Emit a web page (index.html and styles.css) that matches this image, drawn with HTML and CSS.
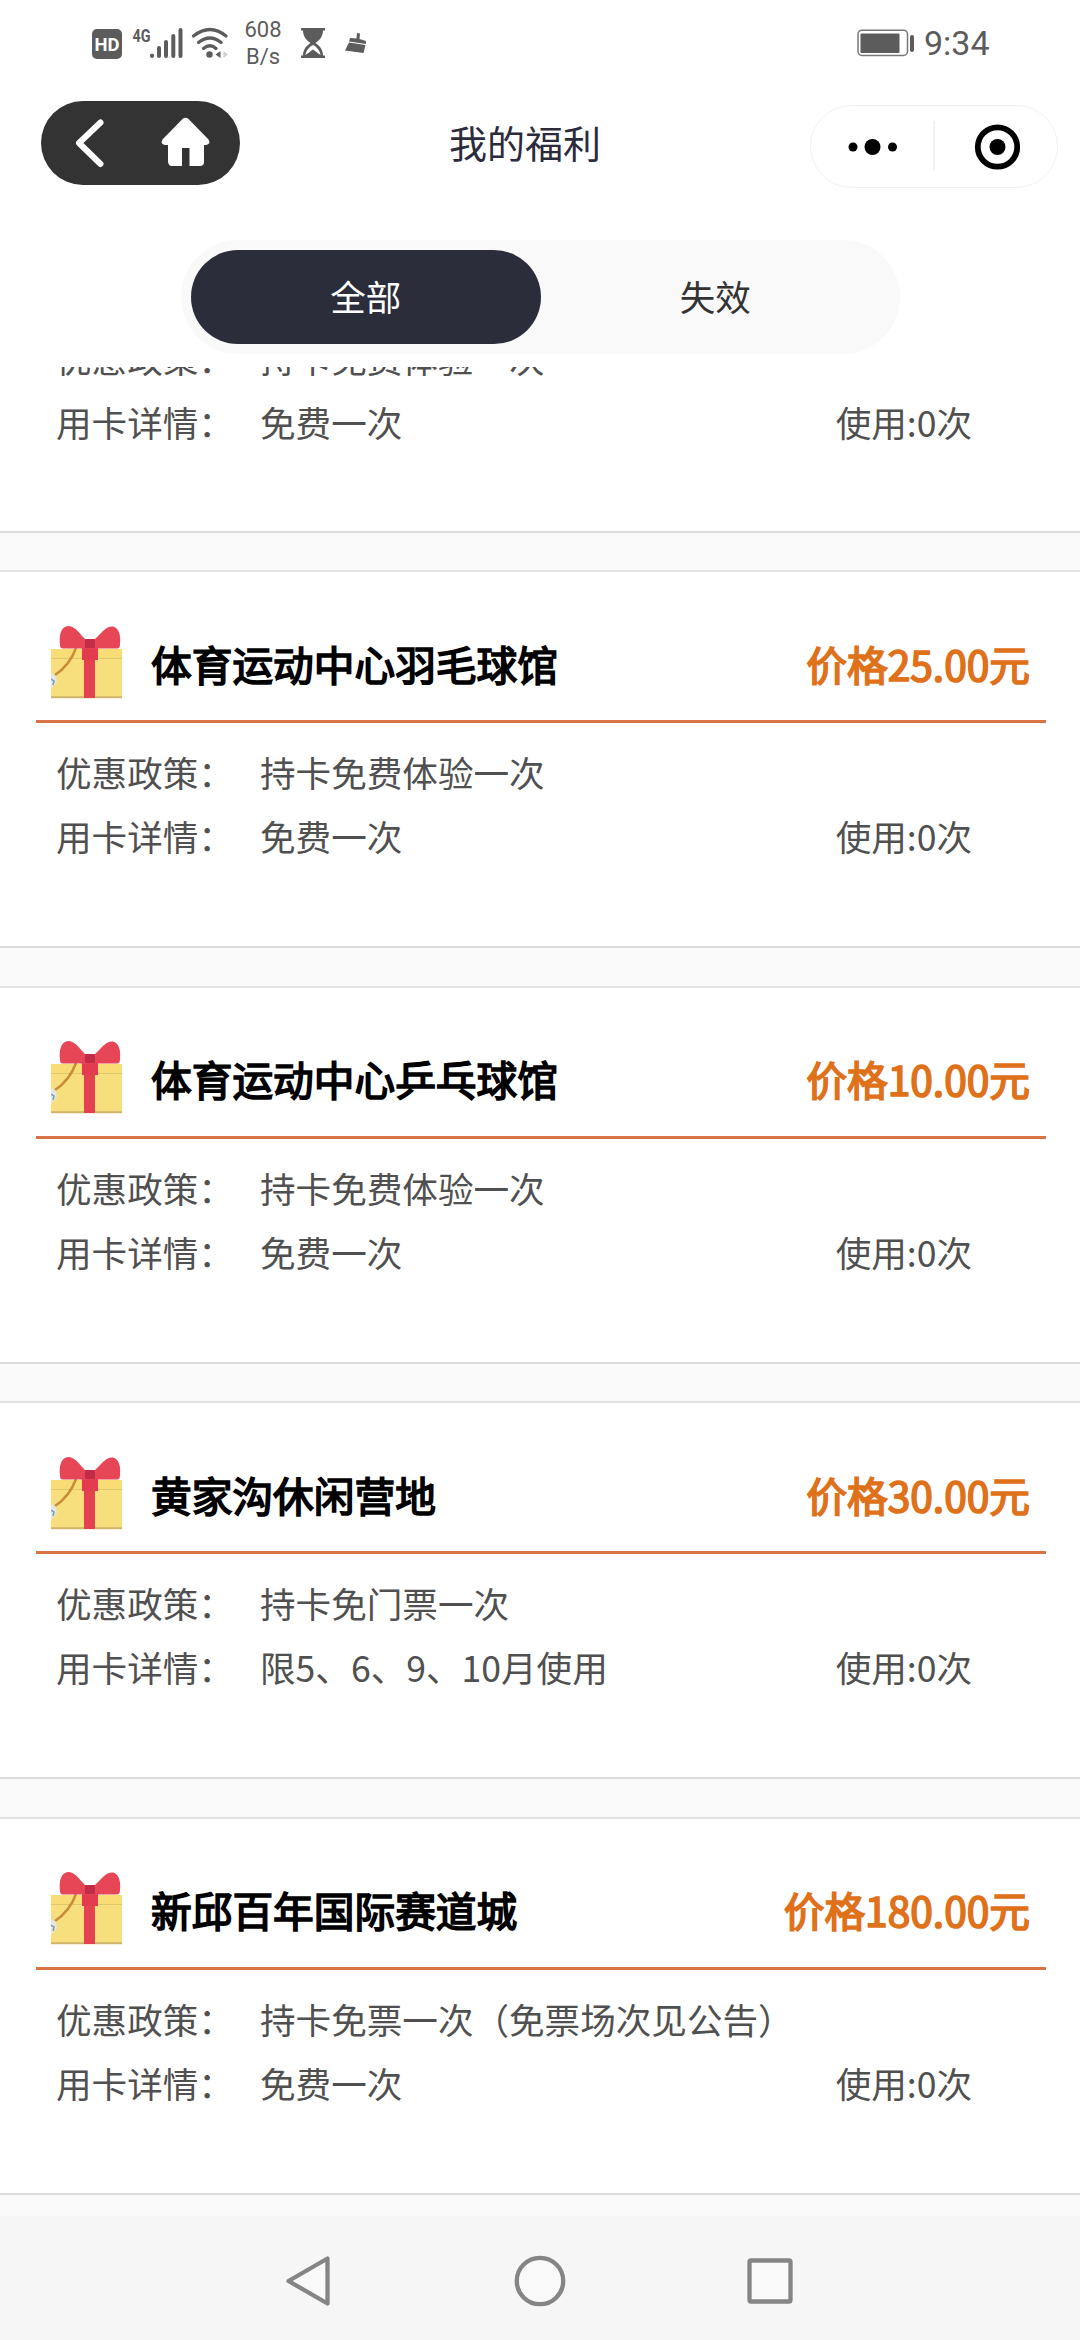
FILE: index.html
```html
<!DOCTYPE html>
<html lang="zh-CN">
<head>
<meta charset="utf-8">
<title>我的福利</title>
<link rel="stylesheet" href="styles.css">
</head>
<body>
<svg class="defs" width="0" height="0" aria-hidden="true">
  <symbol id="gift" viewBox="0 0 72 74">
    <rect x="0" y="24" width="71" height="49" fill="#f6df7c"/>
    <rect x="0" y="24" width="71" height="9" fill="#f8dc76"/>
    <path d="M0 33.5H71" stroke="#ddc86d" stroke-width="1"/>
    <path d="M0 72.3H71" stroke="#cdb56c" stroke-width="2"/>
    <path d="M25 23C20 37 13 44 4 50" fill="none" stroke="#c98a39" stroke-width="2.4"/>
    <path d="M0 48L5 51L6 57L0 64Z" fill="#e3e7e8"/>
    <path d="M0 54L3 56L2 60" fill="none" stroke="#8199a8" stroke-width="1.5"/>
    <rect x="33" y="24" width="11" height="49" fill="#e44251"/>
    <rect x="31" y="21" width="16" height="14" fill="#e23c4e"/>
    <path d="M34 14C28 8 24 1 17 1C9 2 8 12 9 20C9 22.500 10 23.500 12 23.500H66C68 23.500 69 22 69 19C70 11 68 3 62 1.500C54 1 50 9 44 14Z" fill="#e64656"/>
    <rect x="34" y="14" width="10" height="9" rx="1" fill="#c22c46"/>
  </symbol>
</svg>

<header class="statusbar">
  <svg class="status-icons" width="150" height="40" viewBox="90 22 150 40">
    <rect x="92" y="28" width="30" height="30" rx="5" fill="#5c5c5c"/>
    <text class="hd" x="94.6" y="50" textLength="25" lengthAdjust="spacingAndGlyphs">HD</text>
    <text class="net" x="132.5" y="40.5" textLength="18" lengthAdjust="spacingAndGlyphs">4G</text>
    <g stroke="#5c5c5c" stroke-width="4" stroke-linecap="round">
      <path d="M152 54.5V55M159 47V55M166 41V55M173.3 35V55M180.500 29V55"/>
    </g>
    <g fill="none" stroke="#5c5c5c" stroke-width="3.2" stroke-linecap="round">
      <path d="M193.500 35Q210 22 226 35M198.500 41.500Q210 32.500 221 41.500M203.500 47.500Q210 42 216 47.500"/>
    </g>
    <circle cx="209.500" cy="53.500" r="3.2" fill="#5c5c5c"/>
    <path d="M220.500 50V57L215.500 53.500Z" fill="#5c5c5c"/>
    <path d="M223.500 50V57L228 53.500Z" fill="#cfcfcf"/>
  </svg>
  <div class="speed"><span>608</span><span>B/s</span></div>
  <svg class="hourglass" width="24" height="32" viewBox="0 0 24 32">
    <path d="M0 1H24V3.500H22C22 9 19 13 14.500 16C19 19 22 23 22 28.500H24V31H0V28.500H2C2 23 5 19 9.500 16C5 13 2 9 2 3.500H0Z" fill="#5c5c5c"/>
    <path d="M12 18C8 20 5 24 4.500 28L12 22.500L19.500 28C19 24 16 20 12 18Z" fill="#fff"/>
  </svg>
  <svg class="broom" width="22" height="22" viewBox="0 0 22 22">
    <path d="M12 1L15 1.500L14.500 7L21 9V12L4 9.500L5 6L11.500 6.500Z" fill="#5c5c5c"/>
    <path d="M4 10.500L20.500 13L18.500 21L0 18.500Z" fill="#5c5c5c"/>
  </svg>
  <svg class="battery" width="58" height="28" viewBox="0 0 58 28">
    <rect x="1" y="1.200" width="49.500" height="25.300" rx="4" fill="none" stroke="#777" stroke-width="1.500"/>
    <rect x="3.500" y="4.500" width="39" height="19.500" rx="1" fill="#5c5c5c"/>
    <rect x="53" y="6" width="4" height="17" rx="2" fill="#5c5c5c"/>
  </svg>
  <span class="clock">9:34</span>
</header>

<nav class="navbar">
  <div class="back-home">
    <svg width="199" height="84" viewBox="0 0 199 84">
      <path d="M59.500 21.500L38 42L59.500 63" fill="none" stroke="#fff" stroke-width="6" stroke-linecap="round" stroke-linejoin="round"/>
      <path d="M141.500 18Q144.500 15.500 147.500 18L167.500 38.500Q170 43 165 44H163V61Q163 65 159 65H148.500V47H141V65H131Q127 65 127 60V44H124Q119 43 121.500 38.500Z" fill="#fff"/>
    </svg>
  </div>
  <h1 class="page-title">我的福利</h1>
  <div class="capsule">
    <svg width="246" height="82" viewBox="0 0 246 82">
      <g fill="#000">
        <circle cx="42" cy="41" r="4.500"/><circle cx="61.500" cy="41" r="8"/><circle cx="81.500" cy="41" r="4.500"/>
        <circle cx="186.500" cy="41" r="8"/>
      </g>
      <path d="M123 15V64" stroke="#ededed" stroke-width="1.500"/>
      <circle cx="186.500" cy="41" r="19.700" fill="none" stroke="#000" stroke-width="5.800"/>
    </svg>
  </div>
</nav>

<div class="tabs">
  <div class="tab tab-active">全部</div>
  <div class="tab">失效</div>
</div>

<main class="list">
  <section class="card card-scrolled">
    <div class="row"><span class="label">优惠政策：</span><span>持卡免费体验一次</span></div>
    <div class="row"><span class="label">用卡详情：</span><span>免费一次</span><span class="used">使用:0次</span></div>
  </section>
  <section class="card">
    <div class="card-head"><svg class="gift"><use href="#gift"/></svg><h2>体育运动中心羽毛球馆</h2><span class="price">价格25.00元</span></div>
    <div class="row"><span class="label">优惠政策：</span><span>持卡免费体验一次</span></div>
    <div class="row"><span class="label">用卡详情：</span><span>免费一次</span><span class="used">使用:0次</span></div>
  </section>
  <section class="card">
    <div class="card-head"><svg class="gift"><use href="#gift"/></svg><h2>体育运动中心乒乓球馆</h2><span class="price">价格10.00元</span></div>
    <div class="row"><span class="label">优惠政策：</span><span>持卡免费体验一次</span></div>
    <div class="row"><span class="label">用卡详情：</span><span>免费一次</span><span class="used">使用:0次</span></div>
  </section>
  <section class="card">
    <div class="card-head"><svg class="gift"><use href="#gift"/></svg><h2>黄家沟休闲营地</h2><span class="price">价格30.00元</span></div>
    <div class="row"><span class="label">优惠政策：</span><span>持卡免门票一次</span></div>
    <div class="row"><span class="label">用卡详情：</span><span>限5、6、9、10月使用</span><span class="used">使用:0次</span></div>
  </section>
  <section class="card">
    <div class="card-head"><svg class="gift"><use href="#gift"/></svg><h2>新邱百年国际赛道城</h2><span class="price">价格180.00元</span></div>
    <div class="row"><span class="label">优惠政策：</span><span>持卡免票一次（免票场次见公告）</span></div>
    <div class="row"><span class="label">用卡详情：</span><span>免费一次</span><span class="used">使用:0次</span></div>
  </section>
</main>

<footer class="softkeys">
  <svg width="50" height="52" viewBox="0 0 50 52"><path d="M4.500 26L43.500 3.500V48.500Z"/></svg>
  <svg width="52" height="52" viewBox="0 0 52 52"><circle cx="26" cy="26" r="23.200"/></svg>
  <svg width="50" height="52" viewBox="0 0 50 52"><rect x="4.500" y="5.500" width="41" height="41" rx="1.500"/></svg>
</footer>
</body>
</html>
```

FILE: styles.css
```css
* {
  box-sizing: border-box;
}

body {
  margin: 0;
  width: 1080px;
  height: 2340px;
  display: flex;
  flex-direction: column;
  overflow: hidden;
  background: #fff;
  font-family: "Noto Sans CJK SC", "Noto Sans", sans-serif;
  color: #505050;
}

svg {
  display: block;
  flex: none;
}

.defs {
  position: absolute;
}

.statusbar {
  flex: none;
  height: 86px;
  display: flex;
  align-items: center;
  padding: 0 91px 0 90px;
  font-family: Roboto, sans-serif;
  color: #5c5c5c;
}

.hd {
  font: 700 19px Roboto, sans-serif;
  fill: #fff;
}

.net {
  font: 700 18px Roboto, sans-serif;
  fill: #5c5c5c;
}

.speed {
  width: 46px;
  display: flex;
  flex-direction: column;
  align-items: center;
  font-size: 22px;
  line-height: 27px;
}

.hourglass {
  margin-left: 15px;
}

.broom {
  margin-left: 20px;
}

.battery {
  margin-left: auto;
}

.clock {
  width: 65px;
  margin-left: 9px;
  font-size: 34px;
  line-height: 40px;
}

.navbar {
  flex: none;
  height: 154px;
  display: flex;
  align-items: flex-start;
  padding: 15px 22px 0 41px;
}

.back-home {
  width: 199px;
  height: 84px;
  border-radius: 42px;
  background: #333;
}

.page-title {
  margin: 13px 0 0 209px;
  font-size: 38px;
  line-height: 56px;
  font-weight: 400;
  color: #2b2b3b;
}

.capsule {
  margin: 4px 0 0 auto;
  width: 248px;
  height: 83px;
  border: 1.5px solid #f1f1f1;
  border-radius: 42px;
}

.tabs {
  flex: none;
  width: 719px;
  height: 114px;
  margin-left: 181px;
  padding: 10px;
  display: flex;
  border-radius: 57px;
  background: #f9f9f9;
}

.tab {
  flex: 1;
  border-radius: 47px;
  text-align: center;
  font-size: 35.5px;
  line-height: 92px;
  color: #333;
}

.tab-active {
  background: #2b2d3b;
  color: #fff;
}

.list {
  flex: none;
  height: 1849px;
  margin-top: 13px;
  overflow: hidden;
  background: #fafafa;
}

.card {
  height: 378px;
  margin-bottom: 37.4px;
  padding: 0 34px 0 36px;
  border-top: 2px solid #e2e2e2;
  border-bottom: 2px solid #dcdcdc;
  background: #fff;
}

.card-scrolled {
  height: 207px;
  margin-top: -41px;
  border-top: 0;
}

.card-head {
  height: 151px;
  margin-bottom: 17px;
  padding: 54px 16px 0 15px;
  display: flex;
  align-items: center;
  border-bottom: 3px solid #d87443;
}

.gift {
  width: 72px;
  height: 74px;
  margin-top: -23px;
}

.card-head h2,
.price {
  margin: -19px 0 0;
  font-size: 40.7px;
  line-height: 60px;
  font-weight: 400;
  -webkit-text-stroke: 1.7px currentColor;
}

.card-head h2 {
  margin-left: 28px;
  color: #000;
}

.price {
  margin-left: auto;
  color: #df711b;
}

.row {
  display: flex;
  height: 64px;
  padding: 0 74px 0 20px;
  font-size: 35.6px;
  line-height: 64px;
  white-space: nowrap;
}

.label {
  width: 204px;
}

.used {
  margin-left: auto;
}

.softkeys {
  flex: none;
  height: 124px;
  display: flex;
  justify-content: space-between;
  align-items: center;
  padding: 5px 285px 0 284px;
  background: #f6f6f6;
}

.softkeys svg {
  fill: #f9f9f9;
  stroke: #858585;
  stroke-width: 4.3px;
  stroke-linejoin: round;
}
```
